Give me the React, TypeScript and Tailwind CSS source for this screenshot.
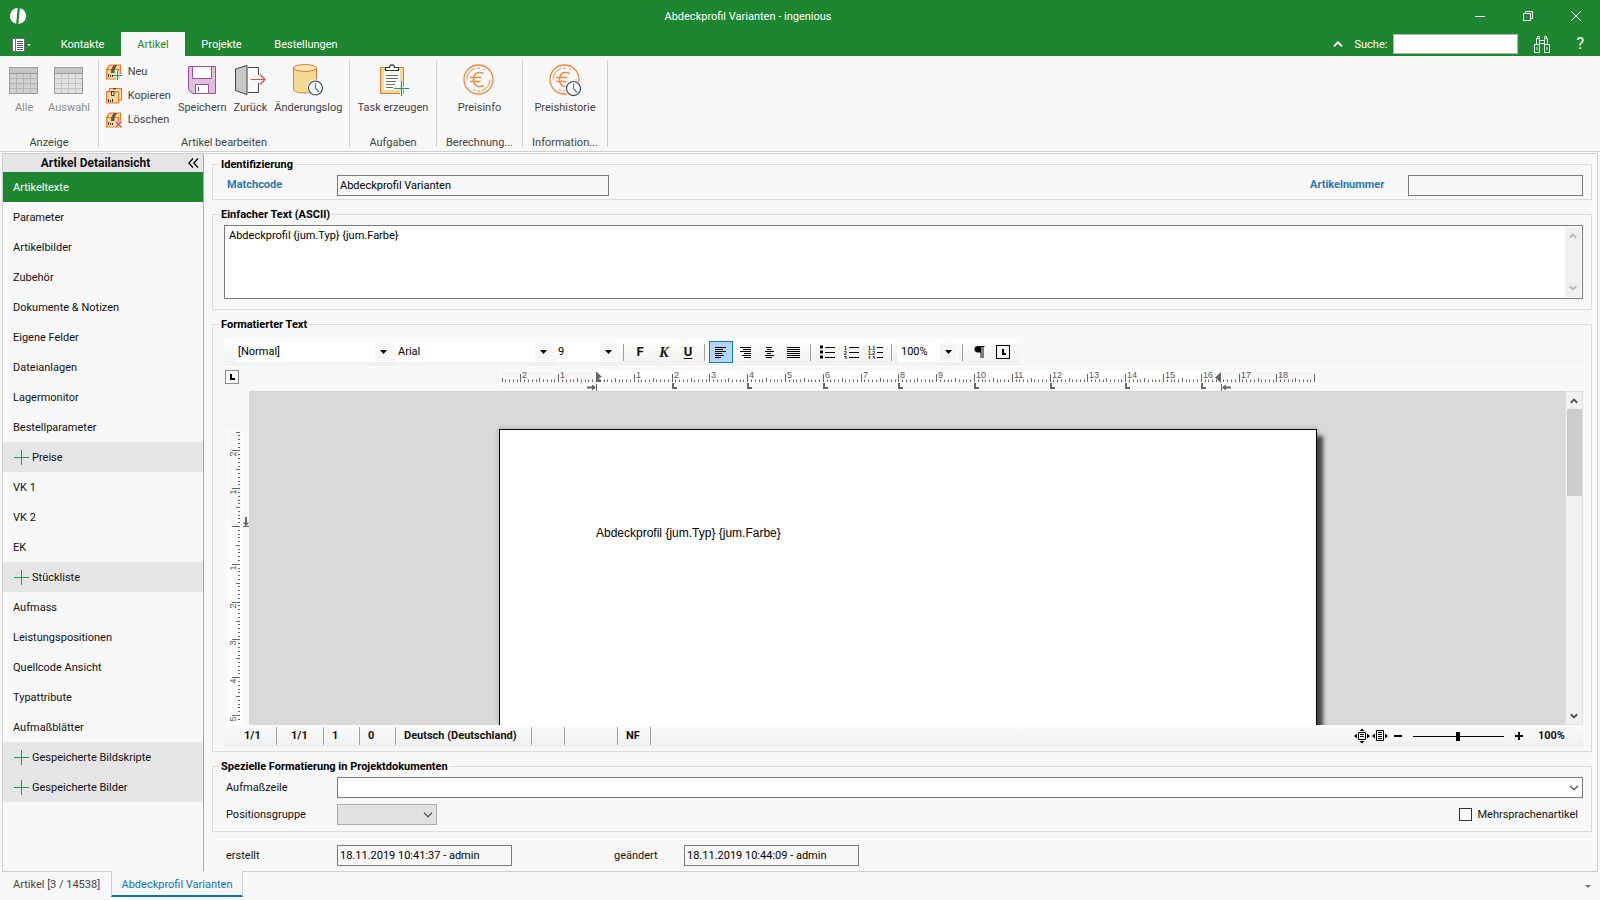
import type { ReactNode } from 'react';

const CM = 37.8;

/* ---------- small drawings ---------- */

function Logo() {
  return (
    <svg width="16" height="16" viewBox="0 0 16 16" aria-hidden="true">
      <path d="M7.6 0A8 8 0 0 0 6.2 15.8Z" fill="#fff" />
      <path d="M9.8 .2A8 8 0 0 1 8.4 16Z" fill="#fff" />
    </svg>
  );
}

function FileMenuIcon() {
  return (
    <svg width="20" height="14" viewBox="0 0 20 14" aria-hidden="true">
      <rect x=".5" y=".5" width="12" height="13" fill="#fff" stroke="#6b6b6b" />
      <path d="M3.5 1v12" stroke="#6b6b6b" />
      <path d="M5 3.5h6M5 5.5h6M5 7.5h6M5 9.5h6M5 11.5h6" stroke="#555" />
      <path d="M15 6h4l-2 2.500z" fill="#b9d8bd" />
    </svg>
  );
}

function TableIcon({ light }: { light?: boolean }) {
  return (
    <svg width="32" height="32" viewBox="0 0 32 32" aria-hidden="true">
      <rect x="1.500" y="3.500" width="28" height="26" fill={light ? '#e0e0e0' : '#d0d0d0'} stroke="#9b9b9b" />
      <rect x="2" y="4" width="27" height="5" fill="#c4c4c4" />
      <path d="M1.500 9.500h28" stroke="#9b9b9b" />
      <path d="M2 14.500h27M2 19.500h27M2 24.500h27M8.500 10v19M15.500 10v19M22.500 10v19" stroke={light ? '#c2c2c2' : '#b4b4b4'} />
    </svg>
  );
}

function BoxBase() {
  return (
    <>
      <path d="M.7 5.500h11.800V15H.7z" fill="#f6d993" stroke="#e3792f" strokeWidth="1.200" />
      <path d="M.7 5.500 3.500 1h11v9l-2 4.500v-9z" fill="#f6d993" stroke="#e3792f" strokeWidth="1.200" strokeLinejoin="round" />
      <path d="M5 6 7.500 1h3.500L8.500 6v3H5z" fill="#5c5650" />
      <path d="M2.500 10v3M4.500 11v2M6.500 11v2" stroke="#333" />
    </>
  );
}

function NewIcon() {
  return (
    <svg width="17" height="16" viewBox="0 0 17 16" aria-hidden="true">
      <BoxBase />
      <path d="M11.500 7v9M7 11.500h9.500" stroke="#f7f7f7" strokeWidth="3" />
      <path d="M11.500 7v9M7 11.500h9" stroke="#12a150" strokeWidth="1.200" />
    </svg>
  );
}

function CopyIcon() {
  return (
    <svg width="17" height="16" viewBox="0 0 17 16" aria-hidden="true">
      <path d="M3.500.7h12V12h-12z" fill="#fbe9bf" stroke="#e3792f" strokeWidth="1.200" />
      <path d="M.7 3.700h12V15H.7z" fill="#f6d993" stroke="#e3792f" strokeWidth="1.200" />
      <path d="M5.500 3.500h2.500v4H5.500zM7 .8h3" fill="#f7efe0" stroke="#333" />
      <path d="M2.500 11v3M4.500 12v2M6.500 11v3" stroke="#333" />
    </svg>
  );
}

function DeleteIcon() {
  return (
    <svg width="17" height="16" viewBox="0 0 17 16" aria-hidden="true">
      <BoxBase />
      <path d="M9 9.500l7 6.500M16 9.500 9 16" stroke="#f7f7f7" strokeWidth="3" />
      <path d="M9.500 9.500l6 6M15.500 9.500l-6 6" stroke="#e8414d" strokeWidth="1.200" />
    </svg>
  );
}

function SaveIcon() {
  return (
    <svg width="32" height="32" viewBox="0 0 32 32" aria-hidden="true">
      <path d="M2.500 2.500h27v27H6.500l-4-4z" fill="#dfbfdc" stroke="#9c4f9e" />
      <path d="M6.500 2.500h19v12h-19z" fill="#fff" stroke="#9c4f9e" />
      <path d="M9.500 20.500h13v9h-13z" fill="#fff" stroke="#9c4f9e" />
      <path d="M12.500 23v4" stroke="#555" />
    </svg>
  );
}

function BackIcon() {
  return (
    <svg width="32" height="32" viewBox="0 0 32 32" aria-hidden="true">
      <path d="M14 3.500h10.500V11M24.500 19v9.500H14" fill="#fff" stroke="#444" />
      <path d="M1.500 5 13 1.500v29L1.500 26.500z" fill="#c8c8c8" stroke="#444" strokeLinejoin="round" />
      <path d="M16.500 15.500h14M26 10.500l5 5-5 5" fill="none" stroke="#e8414d" strokeWidth="1.200" />
    </svg>
  );
}

function Clock({ x, y }: { x: number; y: number }) {
  return (
    <g transform={`translate(${x} ${y})`}>
      <circle r="8.500" fill="#f7f7f7" />
      <circle r="7" fill="#fff" stroke="#3f4650" strokeWidth="1.200" />
      <path d="M0-5V0L3.500 4" fill="none" stroke="#2f86c6" strokeWidth="1.200" />
    </g>
  );
}

function LogIcon() {
  return (
    <svg width="32" height="32" viewBox="0 0 32 32" aria-hidden="true">
      <path d="M1.500 4v21.500c0 2 5 3.500 11.500 3.500s11.500-1.500 11.500-3.500V4" fill="#f6d993" stroke="#e3792f" />
      <ellipse cx="13" cy="4" rx="11.500" ry="3.400" fill="#fae6b4" stroke="#e3792f" />
      <Clock x={23.500} y={24} />
    </svg>
  );
}

function TaskIcon() {
  return (
    <svg width="32" height="32" viewBox="0 0 32 32" aria-hidden="true">
      <path d="M3.500 3.500h23v26h-23z" fill="#f6d993" stroke="#e3792f" />
      <path d="M6.500 6h17v20.500h-17z" fill="#fff" stroke="#e9c98a" strokeWidth=".5" />
      <path d="M8.500 6.500v-3h4C12.500 0 17.500 0 17.500 3.500h4v3z" fill="#fff" stroke="#333" strokeWidth="1.100" />
      <path d="M9 11.500h12M9 14.500h12M9 17.500h10M9 20.500h9M9 23.500h7" stroke="#6d6d6d" />
      <path d="M24.500 17v15M17 24.500h15" stroke="#f7f7f7" strokeWidth="3" />
      <path d="M24.500 17v15M17 24.500h15" stroke="#12a150" strokeWidth="1.200" />
    </svg>
  );
}

function EuroIcon({ clock }: { clock?: boolean }) {
  return (
    <svg width="32" height="32" viewBox="0 0 32 32" aria-hidden="true">
      <g fill="none" stroke="#ec8a3f">
        <circle cx="15.500" cy="15.500" r="14.500" strokeWidth="1.300" />
        <path d="M4 15.500A11.500 11.500 0 0 1 12 4.500M14 4.100h3M27 15.500A11.500 11.500 0 0 1 19 26.500M17 26.900h-3M20 5l2 1M10 25.500l2 .8" />
        <path d="M20.500 9.500C14.500 6.500 10.500 10 10.500 15.500s4 9 10 6M7 13.500h11M7 17.500h10.500" strokeWidth="1.400" />
      </g>
      {clock && <Clock x={24.500} y={24.500} />}
    </svg>
  );
}

function Chevron({ dir, color = '#555', thick = 2, size = 8 }: { dir: 'up' | 'down'; color?: string; thick?: number; size?: number }) {
  return (
    <svg width={size} height={size} viewBox="0 0 8 8" className="shrink-0" aria-hidden="true">
      <path d={dir === 'up' ? 'M.8 5.800 4 2.600l3.200 3.200' : 'M.8 2.200 4 5.400l3.200-3.200'} fill="none" stroke={color} strokeWidth={thick} />
    </svg>
  );
}

function ComboArrow() {
  return (
    <span className="pointer-events-none flex h-full w-[17px] items-center justify-center bg-[#f6f6f6]">
      <svg width="7" height="4" viewBox="0 0 7 4" aria-hidden="true"><path d="M0 0h7L3.500 4z" fill="#000" /></svg>
    </span>
  );
}

function Binoculars() {
  return (
    <svg width="16" height="17" viewBox="0 0 16 17" aria-hidden="true" fill="none" stroke="#e9f4ea">
      <path d="M.5 8.500h5v8h-5zM10.500 8.500h5v8h-5zM2.500 8.500v-6h3v6M10.500 8.500v-6h3v6M5.500 4.500h5M5.500 7.500h5M3.500 2.500v-2h2v2M10.500 2.500v-2h2v2M3 11v3M13 11v3" />
    </svg>
  );
}

function TabStopIcon() {
  return (
    <svg width="14" height="14" viewBox="0 0 14 14" aria-hidden="true">
      <rect x=".5" y=".5" width="13" height="13" fill="none" stroke="#000" />
      <path d="M6 4h2v4h2v2H6z" fill="#000" />
    </svg>
  );
}

/* ---------- rulers ---------- */

function ticks(from: number, to: number) {
  const list: { mm: number; kind: 'major' | 'mid' | 'minor' }[] = [];
  for (let mm = from; mm <= to; mm++) {
    list.push({ mm, kind: mm % 10 === 0 ? 'major' : mm % 5 === 0 ? 'mid' : 'minor' });
  }
  return list;
}

function HorizontalRuler() {
  const zero = 98;
  const at = (mm: number) => Math.round(zero + (mm / 10) * CM) - 0.5;
  return (
    <svg width="818" height="24" viewBox="0 0 818 24" aria-hidden="true" className="shrink-0">
      <rect x=".5" y="3.500" width="817" height="14" fill="#f7f7f7" stroke="#fff" />
      <rect x={zero} y="3" width="624" height="15" fill="#fff" />
      {ticks(-25, 190).map(({ mm, kind }) => (
        <path key={mm} d={`M${at(mm)} 15V${kind === 'major' ? 7 : kind === 'mid' ? 11 : 12.500}`} stroke="#666" />
      ))}
      {ticks(-20, 180).filter((t) => t.kind === 'major' && t.mm !== 0).map(({ mm }) => (
        <text key={mm} x={at(mm) + 1.500} y="11" fontSize="9" fill="#555" fontFamily="Liberation Sans, sans-serif">{Math.abs(mm / 10)}</text>
      ))}
      {[20, 40, 60, 80, 100, 120, 140, 160].map((mm) => (
        <path key={mm} d={`M${at(mm) + 0.500} 16v5h4`} fill="none" stroke="#666" strokeWidth="2" />
      ))}
      <path d="M97 5h1l5 5-3 1 2 4h-5z" fill="#666" />
      <path d="M88 20.500h8" stroke="#666" strokeWidth="2" />
      <path d="M97.500 17v7" stroke="#666" />
      <path d="M93 17.500l4 3-4 3z" fill="#666" />
      <path d="M722 5v11l-6-5.500z" fill="#666" />
      <path d="M724 20.500h8" stroke="#666" strokeWidth="2" />
      <path d="M722.500 17v7" stroke="#666" />
      <path d="M727 17.500l-4 3 4 3z" fill="#666" />
    </svg>
  );
}

function VerticalRuler() {
  const zero = 97;
  const at = (mm: number) => Math.round(zero + (mm / 10) * CM) - 0.5;
  return (
    <svg width="21" className="min-h-0 flex-1" aria-hidden="true">
      <rect x=".5" y=".5" width="14" height={zero} fill="#f7f7f7" stroke="#fff" />
      <rect x="0" y={zero} width="15" height="100%" fill="#fff" />
      {ticks(-25, 51).map(({ mm, kind }) => (
        <path key={mm} d={`M12 ${at(mm)}H${kind === 'major' ? 4 : kind === 'mid' ? 8 : 10}`} stroke="#666" />
      ))}
      {ticks(-20, 50).filter((t) => t.kind === 'major' && t.mm !== 0).map(({ mm }) => (
        <text key={mm} transform={`translate(8 ${at(mm) + 6}) rotate(-90)`} fontSize="9" fill="#555" fontFamily="Liberation Sans, sans-serif">{Math.abs(mm / 10)}</text>
      ))}
      <path d="M18 87v7" stroke="#666" strokeWidth="2" />
      <path d="M15 96.500h6" stroke="#666" />
      <path d="M15 92.500h6l-3 4z" fill="#666" />
    </svg>
  );
}

/* ---------- ribbon ---------- */

function BigButton({ icon, label, disabled }: { icon: ReactNode; label: string; disabled?: boolean }) {
  return (
    <button type="button" disabled={disabled} className="flex flex-col items-center gap-1 text-[#444] disabled:text-[#8a8a8a]">
      {icon}
      <span className="leading-4">{label}</span>
    </button>
  );
}

function SmallButton({ icon, label }: { icon: ReactNode; label: string }) {
  return (
    <button type="button" className="flex h-4 items-center gap-[5px] text-[#444]">
      {icon}
      <span className="leading-4">{label}</span>
    </button>
  );
}

function Group({ label, className, children }: { label: string; className: string; children: ReactNode }) {
  return (
    <section className={`flex h-[87px] flex-col justify-between border-r border-[#cfcfcf] ${className}`}>
      <div className="flex justify-center pt-1">{children}</div>
      <h2 className="text-center leading-[8px] text-[#444]">{label}</h2>
    </section>
  );
}

/* ---------- form parts ---------- */

function Panel({ title, className, children }: { title: string; className: string; children: ReactNode }) {
  return (
    <fieldset className={`min-w-0 border border-[#dcdcdc] pr-2 ${className}`}>
      <legend className="px-[2px] font-bold leading-[15px] text-black">{title}</legend>
      {children}
    </fieldset>
  );
}

const field = 'h-[21px] border border-[#7a7a7a] bg-[#f7f7f7] px-[2px] text-black outline-none';

/* ---------- sidebar ---------- */

const entries: { label: string; group?: boolean }[] = [
  { label: 'Artikeltexte' },
  { label: 'Parameter' },
  { label: 'Artikelbilder' },
  { label: 'Zubehör' },
  { label: 'Dokumente & Notizen' },
  { label: 'Eigene Felder' },
  { label: 'Dateianlagen' },
  { label: 'Lagermonitor' },
  { label: 'Bestellparameter' },
  { label: 'Preise', group: true },
  { label: 'VK 1' },
  { label: 'VK 2' },
  { label: 'EK' },
  { label: 'Stückliste', group: true },
  { label: 'Aufmass' },
  { label: 'Leistungspositionen' },
  { label: 'Quellcode Ansicht' },
  { label: 'Typattribute' },
  { label: 'Aufmaßblätter' },
  { label: 'Gespeicherte Bildskripte', group: true },
  { label: 'Gespeicherte Bilder', group: true },
];

function Sidebar() {
  return (
    <aside className="flex w-[201px] shrink-0 flex-col border-r border-[#a8a8a8]">
      <div className="flex h-[18px] items-center bg-[#e5e5e5] pr-1">
        <h2 className="flex-1 text-center text-[12px] font-bold leading-4">Artikel Detailansicht</h2>
        <button type="button" aria-label="Einklappen">
          <svg width="11" height="10" viewBox="0 0 11 10" aria-hidden="true">
            <path d="M5 .5.8 5 5 9.500M10 .5 5.800 5l4.200 4.500" fill="none" stroke="#000" strokeWidth="1.200" />
          </svg>
        </button>
      </div>
      <nav>
        <ul>
          {entries.map(({ label, group }, i) => (
            <li key={label}>
              <a
                href="#"
                className={
                  i === 0
                    ? 'flex h-[30px] items-center bg-[#1e8630] px-[10px] text-white'
                    : group
                      ? 'flex h-[30px] items-center gap-[3px] bg-[#e5e5e5] px-[11px]'
                      : 'flex h-[30px] items-center px-[10px]'
                }
              >
                {group && (
                  <svg width="15" height="15" viewBox="0 0 15 15" aria-hidden="true">
                    <path d="M7.500 0v15M0 7.500h15" stroke="#12a150" />
                  </svg>
                )}
                <span className="pt-[2px]">{label}</span>
              </a>
            </li>
          ))}
        </ul>
      </nav>
    </aside>
  );
}

/* ---------- editor ---------- */

function Combo({ label, value, className }: { label: string; value: string; className: string }) {
  return (
    <span className={`flex h-5 shrink-0 items-center border border-[#fdfdfd] bg-white ${className}`}>
      <select aria-label={label} className="h-full min-w-0 flex-1 appearance-none bg-transparent px-[2px] text-black outline-none">
        <option>{value}</option>
      </select>
      <ComboArrow />
    </span>
  );
}

function ToolButton({ label, active, children }: { label: string; active?: boolean; children: ReactNode }) {
  return (
    <button
      type="button"
      aria-label={label}
      className={
        active
          ? 'flex h-[22px] w-6 shrink-0 items-center justify-center border border-[#0a7bd6] bg-[#b3d6f3]'
          : 'flex h-[22px] w-6 shrink-0 items-center justify-center'
      }
    >
      {children}
    </button>
  );
}

function Sep({ className }: { className: string }) {
  return <span className={`h-[17px] w-px shrink-0 bg-[#a0a0a0] ${className}`} />;
}

function Lines({ d, w = 13, h = 11 }: { d: string; w?: number; h?: number }) {
  return (
    <svg width={w} height={h} viewBox={`0 0 ${w} ${h}`} aria-hidden="true">
      <path d={d} stroke="#000" fill="none" />
    </svg>
  );
}

function ListIcon({ marks }: { marks: string[] }) {
  return (
    <svg width="15" height="14" viewBox="0 0 15 14" aria-hidden="true">
      {marks.map((m, i) =>
        m === '' ? (
          <rect key={i} x="0" y={i * 5 + 0.500} width="3" height="3" fill="#000" />
        ) : (
          <text key={i} x="0" y={i * 5 + 4.500} fontSize="5" fontWeight="700" fontFamily="Liberation Sans, sans-serif">{m}</text>
        ),
      )}
      <path d={marks[0].length > 2 ? 'M9 2.500h6M9 7.500h6M9 12.500h6' : 'M5 2.500h10M5 7.500h10M5 12.500h10'} stroke="#000" />
    </svg>
  );
}

function Toolbar() {
  return (
    <div className="border-b border-white">
      <div role="toolbar" aria-label="Formatierung" className="flex h-7 w-[796px] items-center rounded-r bg-linear-to-b from-[#fdfdfd] to-[#f0f0f0] pl-[11px]">
        <Combo label="Formatvorlage" value="[Normal]" className="w-[158px]" />
        <Combo label="Schriftart" value="Arial" className="ml-[2px] w-[158px]" />
        <Combo label="Schriftgröße" value="9" className="ml-[2px] w-[63px]" />
        <Sep className="ml-[5px] mr-1" />
        <ToolButton label="Fett"><span className="text-[13px] font-bold">F</span></ToolButton>
        <ToolButton label="Kursiv"><span className="font-['Liberation_Serif',serif] text-[14px] font-bold italic">K</span></ToolButton>
        <ToolButton label="Unterstrichen"><span className="text-[13px] font-bold underline underline-offset-2">U</span></ToolButton>
        <Sep className="mx-1" />
        <ToolButton label="Linksbündig" active>
          <Lines d="M0 .5h11M0 2.500h8M0 4.500h11M0 6.500h7M0 8.500h9M0 10.500h6" />
        </ToolButton>
        <ToolButton label="Rechtsbündig"><Lines d="M1 .5h11M4 2.500h8M1 4.500h11M5 6.500h7M3 8.500h9M5 10.500h7" /></ToolButton>
        <ToolButton label="Zentriert"><Lines d="M3 .5h6M4 2.500h4M2 4.500h9M4 6.500h4M2 8.500h9M3 10.500h6" /></ToolButton>
        <ToolButton label="Blocksatz"><Lines d="M0 .5h13M0 2.500h13M0 4.500h13M0 6.500h13M0 8.500h13M0 10.500h13" /></ToolButton>
        <Sep className="ml-[5px] mr-1" />
        <ToolButton label="Aufzählung"><ListIcon marks={['', '', '']} /></ToolButton>
        <ToolButton label="Nummerierung"><ListIcon marks={['1', '2', '3']} /></ToolButton>
        <ToolButton label="Gliederung"><ListIcon marks={['1.1', '1.2', '1.3']} /></ToolButton>
        <Sep className="ml-1 mr-[6px]" />
        <Combo label="Zoom" value="100%" className="w-[60px]" />
        <Sep className="mx-1" />
        <ToolButton label="Steuerzeichen">
          <svg width="11" height="12" viewBox="0 0 11 12" aria-hidden="true">
            <path d="M10.500 0v1H9.500v11h-1V1H7.500v11h-1V6.500H4C-.8 6.500-.8 0 4 0z" fill="#000" />
          </svg>
        </ToolButton>
        <ToolButton label="Tabulatoren"><TabStopIcon /></ToolButton>
      </div>
    </div>
  );
}

function StatusBar() {
  const cell = 'flex h-[18px] items-center border-r border-[#a0a0a0]';
  return (
    <div className="flex h-[22px] items-center bg-linear-to-b from-[#fcfcfc] to-[#efefef] text-[11px] font-bold">
      <span className={`${cell} w-[53px] pl-5`}>1/1</span>
      <span className={`${cell} w-[47px] pl-[14px]`}>1/1</span>
      <span className={`${cell} w-9 pl-2`}>1</span>
      <span className={`${cell} w-9 pl-2`}>0</span>
      <span className={`${cell} w-[136px] pl-2`}>Deutsch (Deutschland)</span>
      <span className={`${cell} w-[33px]`} />
      <span className={`${cell} w-[53px]`} />
      <span className={`${cell} w-[33px] pl-2`}>NF</span>
      <div className="ml-auto flex items-center pr-[18px]">
        <button type="button" aria-label="Ganze Seite">
          <svg width="18" height="16" viewBox="0 0 18 16" aria-hidden="true">
            <path d="M4.500 4.500h7v7h-7zM6 6.500h4M6 8.500h4" fill="none" stroke="#000" />
            <path d="M8 .5l2.500 2.500h-5zM8 15.500l2.500-2.500h-5zM0 8l3-2.500v5zM16 8 13 5.500v5z" />
          </svg>
        </button>
        <button type="button" aria-label="Seitenbreite">
          <svg width="18" height="16" viewBox="0 0 18 16" aria-hidden="true">
            <path d="M4.500 2.500h7v10h-7zM6 4.500h4M6 6.500h4M6 8.500h4M6 10.500h4" fill="none" stroke="#000" />
            <path d="M0 8l3-2.500v5zM16 8 13 5.500v5z" />
          </svg>
        </button>
        <button type="button" aria-label="Verkleinern" className="ml-1">
          <svg width="8" height="8" viewBox="0 0 8 8" aria-hidden="true"><path d="M0 4h8" stroke="#000" strokeWidth="2" /></svg>
        </button>
        <input
          type="range"
          aria-label="Zoom"
          defaultValue={50}
          className="ml-[11px] h-[10px] w-[91px] appearance-none bg-[linear-gradient(#000,#000)] bg-[length:100%_1px] bg-center bg-no-repeat [&::-webkit-slider-thumb]:h-[9px] [&::-webkit-slider-thumb]:w-1 [&::-webkit-slider-thumb]:appearance-none [&::-webkit-slider-thumb]:bg-black"
        />
        <button type="button" aria-label="Vergrößern" className="ml-[11px]">
          <svg width="8" height="8" viewBox="0 0 8 8" aria-hidden="true"><path d="M0 4h8M4 0v8" stroke="#000" strokeWidth="2" /></svg>
        </button>
        <span className="ml-[15px]">100%</span>
      </div>
    </div>
  );
}

function Editor() {
  return (
    <>
      <Toolbar />
      <div className="flex h-6">
        <div className="flex w-[25px] shrink-0 pl-px pt-[3px]">
          <span className="flex h-[14px] w-[14px] items-center justify-center border border-[#8a8a8a] bg-white">
            <svg width="5" height="6" viewBox="0 0 5 6" aria-hidden="true"><path d="M0 0h2v4h3v2H0z" /></svg>
          </span>
        </div>
        <div className="flex min-w-0 flex-1 justify-center pl-[2px] pr-[18px]">
          <HorizontalRuler />
        </div>
      </div>
      <div className="flex min-h-[333px] flex-1">
        <div className="flex w-[25px] shrink-0 flex-col pl-1 pt-[39px]">
          <VerticalRuler />
        </div>
        <div className="flex min-w-0 flex-1 justify-center border-t border-[#d3d3d3] bg-[#d9d9d9] pl-[2px] pt-[37px]">
          <div className="w-[818px] border border-b-0 border-black bg-white px-24 pt-[95px] font-['Liberation_Sans',sans-serif] text-[12px] leading-4 text-black shadow-[7px_6px_4px_-1px_#444,0_0_4px_1px_#b5b5b5] [clip-path:inset(-8px_-12px_0_-8px)]">
            Abdeckprofil {'{jum.Typ}'} {'{jum.Farbe}'}
          </div>
        </div>
        <div className="flex w-[18px] shrink-0 flex-col items-center border border-[#e0e0e0] bg-[#f0f0f0]">
          <span className="flex h-[17px] items-center"><Chevron dir="up" /></span>
          <span className="h-[87px] w-[15px] bg-[#cdcdcd]" />
          <span className="mt-auto flex h-[17px] items-center"><Chevron dir="down" /></span>
        </div>
      </div>
      <StatusBar />
    </>
  );
}

/* ---------- page ---------- */

export default function App() {
  return (
    <div className="flex min-h-screen flex-col bg-[#f7f7f7] font-[Roboto,'Noto_Sans',sans-serif] text-[11px] text-[#111]">
      <header className="bg-[#1e8630] text-white">
        <div className="flex h-8 items-center">
          <div className="flex w-10 pl-[10px]"><Logo /></div>
          <h1 className="flex-1 pt-[2px] text-center">Abdeckprofil Varianten - ingenious</h1>
          <button type="button" aria-label="Minimieren" className="flex w-12 justify-center">
            <svg width="10" height="10" viewBox="0 0 10 10" aria-hidden="true"><path d="M0 5.500h10" stroke="#fff" /></svg>
          </button>
          <button type="button" aria-label="Wiederherstellen" className="flex w-12 justify-center">
            <svg width="10" height="10" viewBox="0 0 10 10" aria-hidden="true"><path d="M.5 2.500h7v7h-7zM2.500 2V.5h7v7H8" fill="none" stroke="#fff" /></svg>
          </button>
          <button type="button" aria-label="Schließen" className="flex w-12 justify-center">
            <svg width="10" height="10" viewBox="0 0 10 10" aria-hidden="true"><path d="M0 0l10 10M10 0 0 10" stroke="#fff" /></svg>
          </button>
        </div>
        <div className="flex h-6 items-center">
          <button type="button" aria-label="Menü" className="ml-3 mr-3 flex pt-[2px]"><FileMenuIcon /></button>
          <nav className="flex h-6">
            <a href="#" className="flex w-[77px] items-center justify-center pt-[2px]">Kontakte</a>
            <a href="#" className="flex w-16 items-center justify-center bg-[#f7f7f7] pt-[2px] text-[#1e8630]">Artikel</a>
            <a href="#" className="flex w-[73px] items-center justify-center pt-[2px]">Projekte</a>
            <a href="#" className="flex w-24 items-center justify-center pt-[2px]">Bestellungen</a>
          </nav>
          <div className="ml-auto flex items-center pr-4">
            <button type="button" aria-label="Menüband einklappen" className="mr-3"><Chevron dir="up" color="#fff" thick={1.5} size={10} /></button>
            <label htmlFor="suche" className="mr-[6px] pt-[2px]">Suche:</label>
            <input id="suche" className="h-5 w-[125px] border border-[#a9b8ab] bg-white px-1 text-black outline-none" />
            <button type="button" aria-label="Suchen" className="ml-4"><Binoculars /></button>
            <button type="button" aria-label="Hilfe" className="ml-[26px] text-[16px] leading-5">?</button>
          </div>
        </div>
      </header>

      <div className="flex h-24 items-start border-b border-[#cfcfcf] pt-1">
        <Group label="Anzeige" className="w-[99px]">
          <div className="flex gap-2">
            <BigButton disabled icon={<TableIcon />} label="Alle" />
            <BigButton disabled icon={<TableIcon light />} label="Auswahl" />
          </div>
        </Group>
        <Group label="Artikel bearbeiten" className="w-[251px]">
          <div className="flex items-start gap-[7px]">
            <div className="flex flex-col gap-2">
              <SmallButton icon={<NewIcon />} label="Neu" />
              <SmallButton icon={<CopyIcon />} label="Kopieren" />
              <SmallButton icon={<DeleteIcon />} label="Löschen" />
            </div>
            <BigButton icon={<SaveIcon />} label="Speichern" />
            <BigButton icon={<BackIcon />} label="Zurück" />
            <BigButton icon={<LogIcon />} label="Änderungslog" />
          </div>
        </Group>
        <Group label="Aufgaben" className="w-[87px]">
          <BigButton icon={<TaskIcon />} label="Task erzeugen" />
        </Group>
        <Group label="Berechnung..." className="w-[86px]">
          <BigButton icon={<EuroIcon />} label="Preisinfo" />
        </Group>
        <Group label="Information..." className="w-[85px]">
          <BigButton icon={<EuroIcon clock />} label="Preishistorie" />
        </Group>
      </div>

      <div className="mx-[2px] mt-px flex flex-1 border border-b-0 border-[#cfcfcf]">
        <Sidebar />
        <main className="flex min-w-0 flex-1 flex-col gap-[7px] pl-2 pr-[5px] pt-[3px]">
          <Panel title="Identifizierung" className="pb-[3px] pl-[14px] [&>legend]:-ml-[8px]">
            <div className="flex items-center pt-[3px]">
              <label htmlFor="matchcode" className="w-[110px] font-bold text-[#2a7ab0]">Matchcode</label>
              <input id="matchcode" readOnly defaultValue="Abdeckprofil Varianten" className={`${field} w-[272px]`} />
              <label htmlFor="artikelnummer" className="ml-auto w-[98px] font-bold text-[#2a7ab0]">Artikelnummer</label>
              <input id="artikelnummer" readOnly className={`${field} w-[175px]`} />
            </div>
          </Panel>

          <Panel title="Einfacher Text (ASCII)" className="pb-[10px] pl-[11px] [&>legend]:-ml-[5px]">
            <div className="mt-[3px] flex h-[74px] border border-[#7a7a7a] bg-white p-px">
              <textarea
                aria-label="Einfacher Text (ASCII)"
                defaultValue="Abdeckprofil {jum.Typ} {jum.Farbe}"
                className="min-w-0 flex-1 resize-none px-[3px] pt-px leading-4 text-black outline-none"
              />
              <div className="flex w-4 flex-col items-center justify-between bg-[#f0f0f0] py-[5px]">
                <Chevron dir="up" color="#bbb" />
                <Chevron dir="down" color="#bbb" />
              </div>
            </div>
          </Panel>

          <Panel title="Formatierter Text" className="flex flex-1 flex-col pb-[4px] pl-[11px] [&>legend]:-ml-[5px]">
            <div className="flex flex-1 flex-col pt-[6px]">
              <Editor />
            </div>
          </Panel>

          <Panel title="Spezielle Formatierung in Projektdokumenten" className="pb-[6px] pl-[13px] [&>legend]:-ml-[7px]">
            <div className="flex flex-col gap-[6px] pt-[3px]">
              <div className="flex items-center">
                <label htmlFor="aufmasszeile" className="w-[111px] pt-[2px]">Aufmaßzeile</label>
                <div className="flex h-[21px] flex-1 items-center border border-[#7a7a7a] bg-white pr-[3px]">
                  <select id="aufmasszeile" className="h-full flex-1 appearance-none bg-transparent px-1 outline-none">
                    <option></option>
                  </select>
                  <Chevron dir="down" thick={1} size={10} />
                </div>
              </div>
              <div className="flex items-center">
                <label htmlFor="positionsgruppe" className="w-[111px] pt-[2px]">Positionsgruppe</label>
                <div className="flex h-[21px] w-[100px] items-center border border-[#adadad] bg-[#e1e1e1] pr-[3px]">
                  <select id="positionsgruppe" className="h-full min-w-0 flex-1 appearance-none bg-transparent px-1 outline-none">
                    <option></option>
                  </select>
                  <Chevron dir="down" thick={1} size={10} />
                </div>
                <label className="ml-auto flex items-center gap-[5px] pr-[5px]">
                  <input type="checkbox" className="h-[13px] w-[13px] appearance-none border border-[#333] bg-white" />
                  <span className="pt-[2px]">Mehrsprachenartikel</span>
                </label>
              </div>
            </div>
          </Panel>

          <div className="mr-px flex items-center border-t border-white pb-[5px] pl-[14px] pt-[5px]">
            <label htmlFor="erstellt" className="w-[111px] pt-[2px]">erstellt</label>
            <input id="erstellt" readOnly defaultValue="18.11.2019 10:41:37 - admin" className={`${field} w-[175px]`} />
            <label htmlFor="geaendert" className="ml-[102px] w-[70px] pt-[2px]">geändert</label>
            <input id="geaendert" readOnly defaultValue="18.11.2019 10:44:09 - admin" className={`${field} w-[175px]`} />
          </div>
        </main>
      </div>

      <nav className="flex h-[29px] items-start">
        <a href="#" className="ml-[2px] flex h-[26px] w-[109px] items-center border-t border-[#cfcfcf] pl-[11px] pt-[2px] text-[#444]">Artikel [3 / 14538]</a>
        <a href="#" className="flex h-[26px] w-[132px] items-center justify-center border-x border-b-2 border-x-[#cfcfcf] border-b-[#1170c0] pt-1 text-[#1170c0]">Abdeckprofil Varianten</a>
        <div className="mr-[2px] flex h-[26px] flex-1 items-center justify-end border-t border-[#cfcfcf] pr-[7px] pt-1">
          <svg width="6" height="3" viewBox="0 0 6 3" aria-hidden="true"><path d="M0 0h6L3 3z" fill="#777" /></svg>
        </div>
      </nav>
    </div>
  );
}
